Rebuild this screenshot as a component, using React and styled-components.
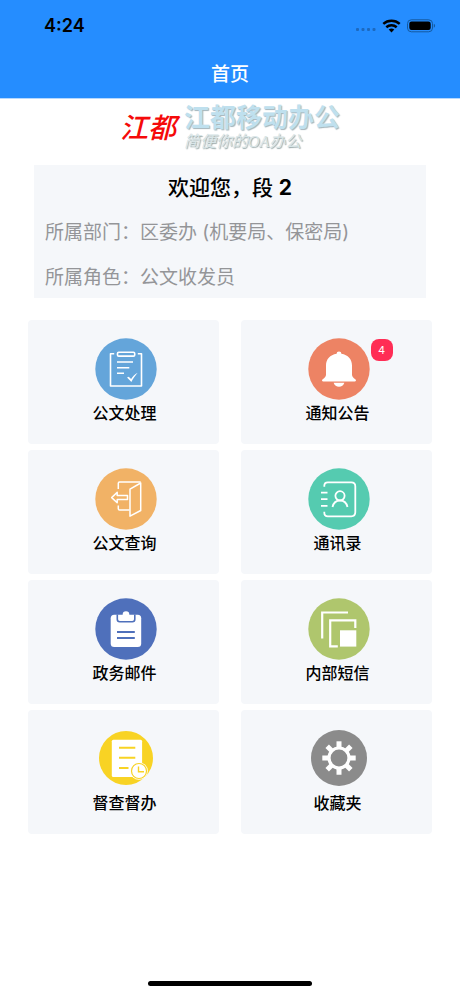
import React from "react";
import styled, { createGlobalStyle } from "styled-components";

const GlobalStyle = createGlobalStyle`
  * {
    box-sizing: border-box;
  }
  body {
    margin: 0;
    background-color: #ffffff;
    font-family: Inter, "Noto Sans CJK SC", sans-serif;
    color: #000000;
  }
`;

const Page = styled.div`
  display: flex;
  flex-direction: column;
  min-height: 100vh;
`;

const Header = styled.header`
  background-color: #258dff;
  border-bottom: 1px solid #b5d8ff;
`;

const StatusBar = styled.div`
  display: flex;
  align-items: center;
  justify-content: space-between;
  height: 52px;
  padding: 0 24px 0 44px;
`;

const Time = styled.span`
  font-size: 18px;
  font-weight: 600;
  line-height: 24px;
`;

const NavTitle = styled.h1`
  margin: 0;
  height: 46px;
  line-height: 46px;
  text-align: center;
  font-size: 19px;
  font-weight: 500;
  color: #ffffff;
`;

const Brand = styled.div`
  display: flex;
  justify-content: center;
  align-items: center;
  gap: 8px;
  height: 54px;
  padding-top: 4px;
  margin-bottom: 12px;
`;

const BrandMark = styled.span`
  font-size: 28px;
  font-style: italic;
  font-weight: 500;
  line-height: 40px;
  color: #f50a0a;
`;

const BrandText = styled.div`
  display: flex;
  flex-direction: column;
`;

const BrandName = styled.span`
  font-size: 26px;
  font-weight: 700;
  line-height: 28px;
  color: #bfe0ee;
  text-shadow: 1px 1px 1px #a3b4bb;
`;

const BrandSlogan = styled.span`
  font-family: "Liberation Serif", "Noto Sans CJK SC", serif;
  font-size: 16px;
  font-style: italic;
  line-height: 20px;
  color: #d8e5e7;
  text-shadow: 1px 1px 1px #9aa9aa;
`;

const WelcomeCard = styled.section`
  display: flex;
  flex-direction: column;
  gap: 17px;
  margin: 0 34px 22px;
  padding: 9px 11px 6px;
  background-color: #f5f7fa;
`;

const Welcome = styled.h2`
  margin: 0;
  text-align: center;
  font-size: 21px;
  font-weight: 500;
  line-height: 28px;

  b {
    font-weight: 700;
  }
`;

const InfoLine = styled.p`
  margin: 0;
  font-size: 19px;
  line-height: 28px;
  color: #949598;
`;

const Grid = styled.main`
  display: grid;
  grid-template-columns: 1fr 1fr;
  gap: 6px 22px;
  padding: 0 28px;
`;

const Tile = styled.button`
  display: flex;
  flex-direction: column;
  align-items: center;
  gap: 1px;
  padding: 18px 0 19px 2px;
  border: none;
  border-radius: 4px;
  background-color: #f5f7fa;
  font-family: inherit;
  color: inherit;
  cursor: pointer;
`;

const TileIcon = styled.span`
  position: relative;
  height: 62px;

  svg {
    display: block;
  }
`;

const TileLabel = styled.span`
  font-size: 16px;
  font-weight: 500;
  line-height: 24px;
`;

const Badge = styled.span`
  position: absolute;
  top: 1px;
  left: 100%;
  width: 22px;
  height: 22px;
  margin-left: 1px;
  border-radius: 8px;
  background-color: #ff2d55;
  color: #ffffff;
  font-size: 11px;
  line-height: 22px;
  text-align: center;
`;

const HomeIndicator = styled.div`
  width: 164px;
  height: 5px;
  margin: auto auto 10px;
  border-radius: 3px;
  background-color: #000000;
`;

const StatusIcons = () => (
  <svg width="80" height="14" viewBox="0 0 80 14" aria-hidden="true">
    <g fill="#1c69bf">
      <rect x="0" y="9" width="3" height="3" rx="1" />
      <rect x="5.5" y="9" width="3" height="3" rx="1" />
      <rect x="11" y="9" width="3" height="3" rx="1" />
      <rect x="16.5" y="9" width="3" height="3" rx="1" />
    </g>
    <g fill="none" stroke="#000" strokeWidth="2.5">
      <path d="M27.3 4.9a12.3 12.3 0 0 1 16.4 0" />
      <path d="M30.3 8.2a7.9 7.9 0 0 1 10.4 0" />
    </g>
    <path d="M32.7 10.6a4.6 4.6 0 0 1 5.6 0l-2.8 2.9z" />
    <rect x="51.5" y="0.8" width="25" height="12" rx="3.8" fill="none" stroke="#14599f" />
    <rect x="53.3" y="2.6" width="21.4" height="8.4" rx="2.2" />
    <path d="M77.8 4.8v4a2.2 2.2 0 0 0 0-4z" fill="#14599f" />
  </svg>
);

// the disc is drawn around 0,0
const Disc = ({ color, r = 30.7, children }) => (
  <svg width="64" height="62" viewBox="-33 -31 64 62" aria-hidden="true">
    <circle r={r} cy={r < 30 ? -1 : 0} fill={color} />
    {children}
  </svg>
);

const DocIcon = () => (
  <Disc color="#64a5da">
    <g fill="none" stroke="#fff" strokeWidth="1.6">
      <path d="M-11.8-15.3h-3.7v32.3h31v-32.3h-3.7" strokeLinejoin="round" />
      <rect x="-8.5" y="-16.8" width="17.2" height="3.9" rx="1.2" />
      <path d="M-9-7H7M-9-1.3H3.3M-9 4.2h7" />
    </g>
    <path d="M1 8.6l1.7-.9 2.4 2.4c1.5-2.6 3.6-4.7 6.6-6.4-2.5 2.8-4.7 5.8-6.3 9.2z" fill="#fff" />
  </Disc>
);

const BellIcon = () => (
  <Disc color="#ed8364">
    <path
      d="M-2.4-15.3a2.4 2.2 0 0 1 4.8 0C9-14.3 13-9.8 13-3.5V5.5c0 2.2 1.2 3.2 3.3 4.7 1.2 1 .7 2.3-.6 2.3h-31.4c-1.3 0-1.8-1.3-.6-2.3 2.1-1.5 3.3-2.5 3.3-4.7v-9C-13-9.8-9-14.3-2.4-15.3z"
      fill="#fff"
    />
    <path d="M-5.4 13.7H5.4C4.5 16.5 2.5 17.8 0 17.8S-4.5 16.5-5.4 13.7z" fill="#fff" />
  </Disc>
);

const DoorIcon = () => (
  <Disc color="#f1b266">
    <g fill="none" stroke="#fff" strokeWidth="1.5" strokeLinejoin="round">
      <path d="M-7.7-10v-5.7q0-1.3 1.3-1.3H14.7M-7.7 6.5v3.2q0 1.3 1.3 1.3H3.5" />
      <path d="M4-9.8L14.7-16V11.5L4 17.2z" />
      <path d="M-14.3-1.4L-8.8-6.8v3.3H1.5v3.9H-8.8v3.4z" />
    </g>
  </Disc>
);

const ContactsIcon = () => (
  <Disc color="#55cbb0">
    <g fill="none" stroke="#fff" strokeWidth="1.8">
      <path d="M-14.7-12.2v-1q0-3.5 3.5-3.5H12.3q4 0 4 4V13.3q0 4-4 4H-11.2q-3.5 0-3.5-3.5v-1" />
      <path d="M-18-6.3h6.5M-18 .2h6.5M-18 6.8h6.5" />
      <circle cx="1" cy="-3.2" r="4.6" />
      <path d="M-6.5 8C-5.5 3.8-2.8 1.5 1 1.5S7.5 3.8 8.5 8" />
    </g>
  </Disc>
);

const ClipboardIcon = () => (
  <Disc color="#4f70bb">
    <rect x="-15.3" y="-14.3" width="30.5" height="32.2" rx="3.5" fill="#fff" />
    <circle cy="-14.5" r="3.3" fill="#fff" />
    <g fill="none" stroke="#4f70bb" strokeWidth="1.6">
      <path d="M-8.7-14.5v4.8q0 2.5 2.5 2.5H6.3q2.5 0 2.5-2.5v-4.8" />
      <path d="M-9 3H8.8M-9 9H8.8" strokeWidth="1.9" />
    </g>
  </Disc>
);

const SquaresIcon = () => (
  <Disc color="#afc66d">
    <g fill="none" stroke="#fff" strokeWidth="2.2">
      <path d="M-16.8 9.5v-26H9" />
      <path d="M-1.2 17.3h-7.6v-26H16.3v7.8" />
    </g>
    <rect x="1" y="1.3" width="16.3" height="16.3" fill="#fff" />
  </Disc>
);

const SuperviseIcon = () => (
  <Disc color="#f8d324" r={27}>
    <g transform="translate(0 -1)">
      <rect x="-14.2" y="-18.3" width="30.3" height="37.3" rx="1.5" fill="#fff" />
      <path d="M-7-10.3H9.3M-7-.2H9.3M-7 10H2.5" stroke="#f8d324" strokeWidth="2" />
      <circle cx="13" cy="13" r="8.8" fill="#fff" />
      <circle cx="13" cy="13" r="7.5" fill="none" stroke="#f8d324" strokeWidth="1.2" />
      <path d="M12.5 8.5v5.2h5.5" fill="none" stroke="#f8d324" strokeWidth="1.4" />
    </g>
  </Disc>
);

const GearIcon = () => (
  <Disc color="#8b8b8b" r={28}>
    <g transform="translate(0 -1)">
      {[0, 45, 90, 135, 180, 225, 270, 315].map((angle) => (
        <path key={angle} d="M-2.5-10v-6.7h5v6.7z" transform={`rotate(${angle})`} fill="#fff" />
      ))}
      <circle r="10" fill="none" stroke="#fff" strokeWidth="3.2" />
    </g>
  </Disc>
);

const tiles = [
  { label: "公文处理", Icon: DocIcon },
  { label: "通知公告", Icon: BellIcon, badge: 4 },
  { label: "公文查询", Icon: DoorIcon },
  { label: "通讯录", Icon: ContactsIcon },
  { label: "政务邮件", Icon: ClipboardIcon },
  { label: "内部短信", Icon: SquaresIcon },
  { label: "督查督办", Icon: SuperviseIcon },
  { label: "收藏夹", Icon: GearIcon },
];

const App = () => {
  return (
    <Page>
      <GlobalStyle />
      <Header>
        <StatusBar>
          <Time>4:24</Time>
          <StatusIcons />
        </StatusBar>
        <NavTitle>首页</NavTitle>
      </Header>
      <Brand>
        <BrandMark>江都</BrandMark>
        <BrandText>
          <BrandName>江都移动办公</BrandName>
          <BrandSlogan>简便你的OA办公</BrandSlogan>
        </BrandText>
      </Brand>
      <WelcomeCard>
        <Welcome>
          欢迎您，段 <b>2</b>
        </Welcome>
        <InfoLine>所属部门：区委办 (机要局、保密局)</InfoLine>
        <InfoLine>所属角色：公文收发员</InfoLine>
      </WelcomeCard>
      <Grid>
        {tiles.map(({ label, Icon, badge }) => (
          <Tile key={label} type="button">
            <TileIcon>
              <Icon />
              {badge && <Badge>{badge}</Badge>}
            </TileIcon>
            <TileLabel>{label}</TileLabel>
          </Tile>
        ))}
      </Grid>
      <HomeIndicator />
    </Page>
  );
};

export default App;
